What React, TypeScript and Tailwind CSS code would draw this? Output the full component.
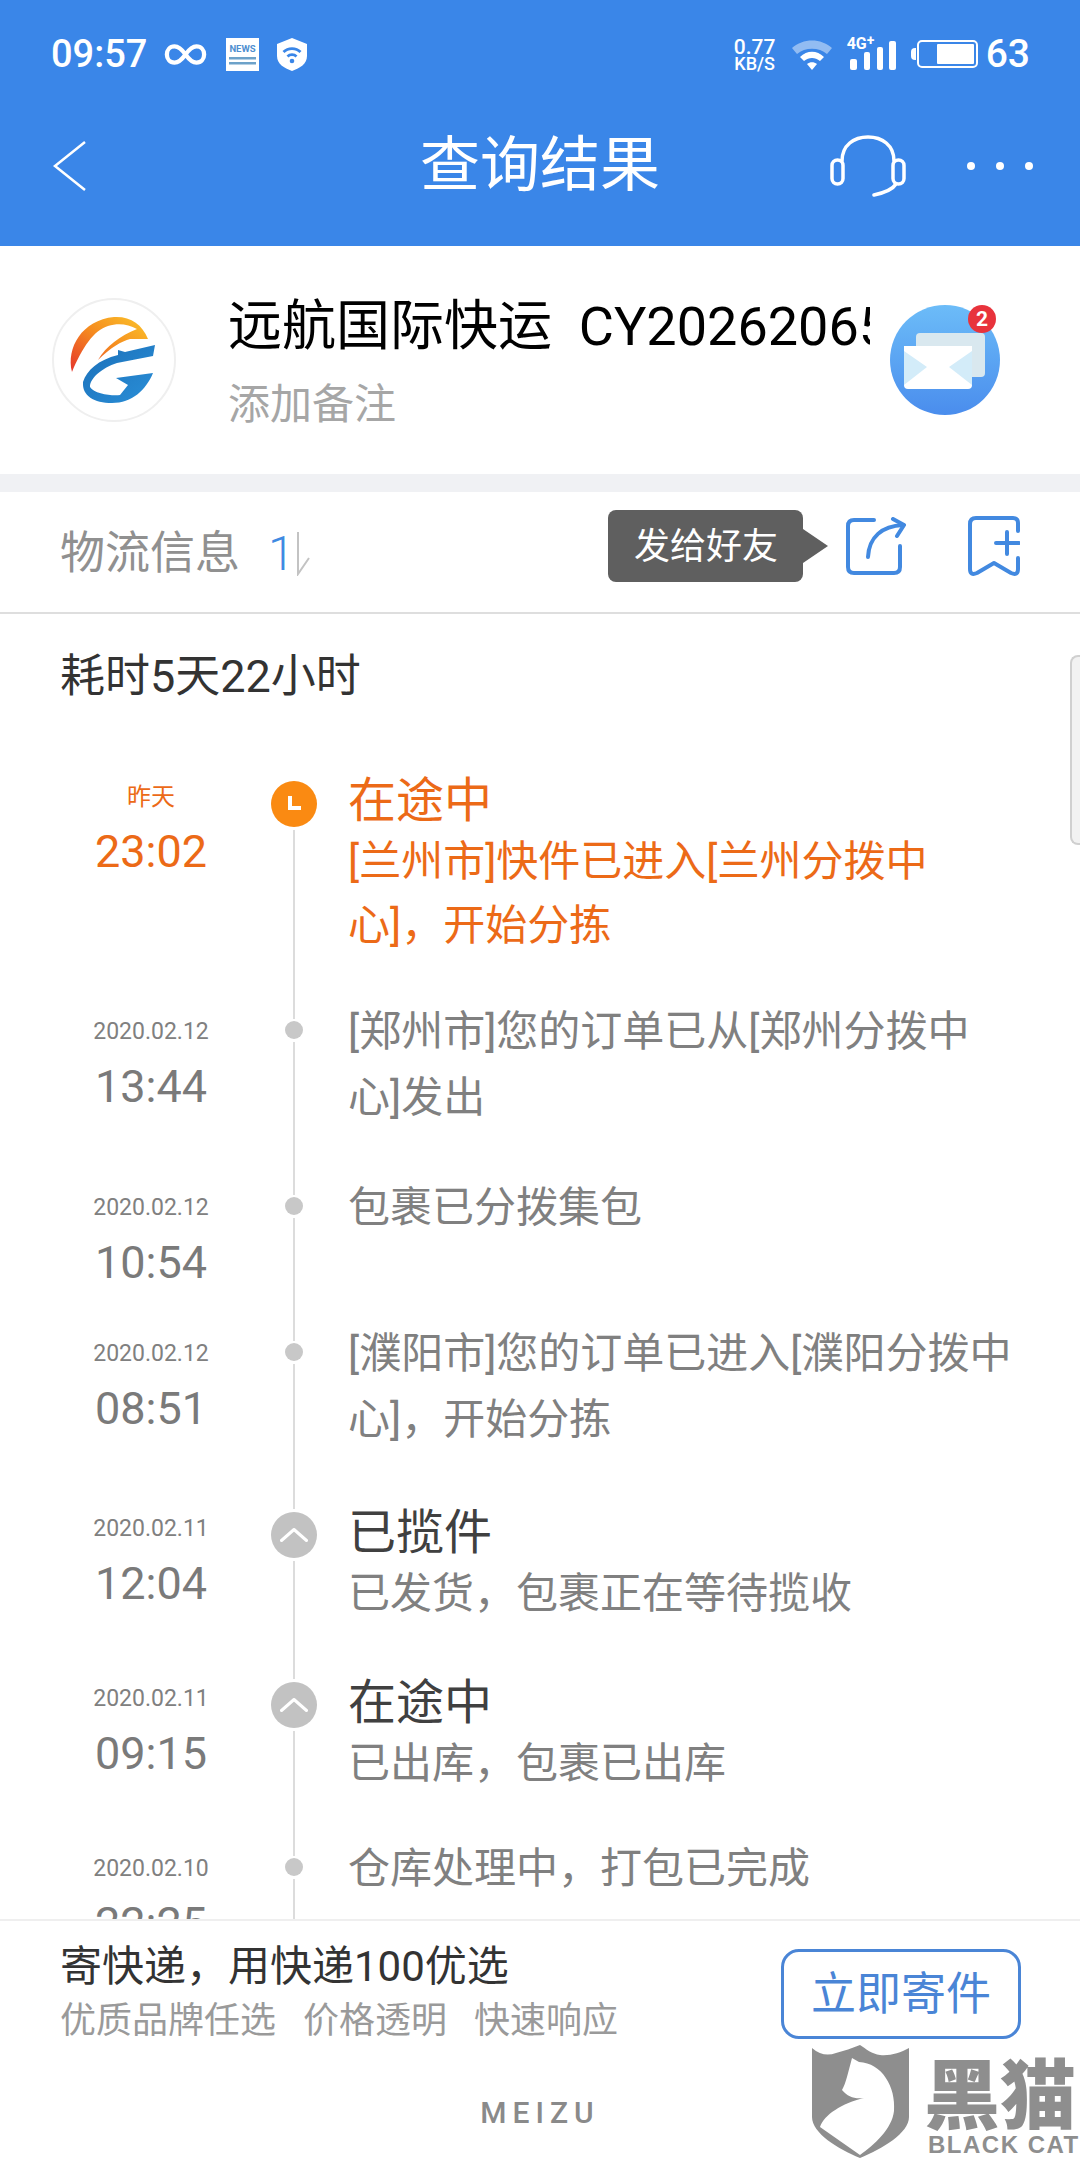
import React from "react";

const cjk = "font-['Roboto','Noto_Sans_CJK_SC',sans-serif]";

function Logo() {
  return (
    <svg viewBox="0 0 124 124" className="w-[124px] h-[124px] shrink-0">
      <defs>
        <linearGradient id="o" x1="0" y1="1" x2="1" y2="0">
          <stop offset="0" stopColor="#e5352c" />
          <stop offset="0.5" stopColor="#f58a1f" />
          <stop offset="1" stopColor="#fbc52a" />
        </linearGradient>
        <linearGradient id="b" x1="0" y1="0" x2="1" y2="1">
          <stop offset="0" stopColor="#1b6fb8" />
          <stop offset="1" stopColor="#2a8fd8" />
        </linearGradient>
      </defs>
      <circle cx="62" cy="62" r="61" fill="#fff" stroke="#efefef" strokeWidth="2" />
      <path d="M20 74C14 50 30 22 62 19C78 18 90 26 96 41L78 41C70 43 58 50 46 62C54 48 68 38 85 31C76 26 66 25 56 28C42 32 30 50 20 74Z" fill="url(#o)" />
      <path d="M103 47L101 58L65 65C50 70 38 80 38 89C42 96 60 98 68 97L76 87L64 80L101 75C94 92 80 105 60 105C42 105 30 98 31 84C35 72 46 62 66 57L66 52L73 54Z" fill="url(#b)" />
    </svg>
  );
}

function MailBadge() {
  return (
    <div className="relative w-[110px] h-[110px] shrink-0">
      <svg viewBox="0 0 110 110" className="w-[110px] h-[110px]">
        <defs>
          <linearGradient id="m" x1="0" y1="0" x2="0" y2="1">
            <stop offset="0" stopColor="#6cbcf8" />
            <stop offset="1" stopColor="#4a8ded" />
          </linearGradient>
        </defs>
        <circle cx="55" cy="55" r="55" fill="url(#m)" />
        <rect x="26" y="28" width="69" height="44" rx="4" fill="#d9e8ef" />
        <rect x="14" y="41" width="68" height="43" rx="4" fill="#ffffff" />
        <path d="M14 46L37 62L14 80Z" fill="#d3ecf9" />
        <path d="M82 46L59 62L82 80Z" fill="#d3ecf9" />
        <path d="M14 45L42 65Q48 69 54 65L82 45V41H14Z" fill="#ffffff" />
      </svg>
      <div className="absolute right-[4px] top-0 w-[28px] h-[28px] rounded-full bg-[#e8333c] text-white text-[21px] leading-[28px] text-center font-['Roboto'] font-bold">2</div>
    </div>
  );
}

function Row({
  h, date, time, text, title, orange, icon,
}: {
  h: string; date: string; time: string; text: string[]; title?: string; orange?: boolean; icon: "clock" | "up" | "dot";
}) {
  const tone = orange ? "text-[#ec6a17]" : "text-[#808080]";
  return (
    <div className={`flex ${h}`}>
      <div className="w-[272px] shrink-0 flex flex-col items-center pl-[30px] pt-[17px]">
        <div className={`h-[32px] leading-[32px] whitespace-nowrap ${orange ? "text-[24px] text-[#ec6a17]" : "text-[23px] text-[#808080]"}`}>{date}</div>
        <div className={`mt-[9px] h-[60px] leading-[60px] text-[45px] ${orange ? "text-[#ec6a17]" : "text-[#7a7a7a]"}`}>{time}</div>
      </div>
      <div className="w-[44px] shrink-0 flex flex-col items-center">
        {icon === "clock" && (
          <div className="mt-[17px] w-[46px] h-[46px] shrink-0 rounded-full bg-[#fa8a12] flex items-center justify-center">
            <svg viewBox="0 0 20 20" className="w-[20px] h-[20px]"><path d="M6 2V14H17" fill="none" stroke="#fff" strokeWidth="4" /></svg>
          </div>
        )}
        {icon === "up" && (
          <>
            <div className="w-[2px] h-[13px] bg-[#dcdcdc]" />
            <div className="mt-[3px] w-[46px] h-[46px] shrink-0 rounded-full bg-[#c2c2c2] flex items-center justify-center">
              <svg viewBox="0 0 28 14" className="w-[28px] h-[14px]"><path d="M1.500 12.500L14 1.500L26.500 12.500" fill="none" stroke="#fff" strokeWidth="3" strokeLinecap="round" strokeLinejoin="round" /></svg>
            </div>
          </>
        )}
        {icon === "dot" && (
          <>
            <div className="w-[2px] h-[20px] bg-[#dcdcdc]" />
            <div className="mt-[2px] w-[18px] h-[18px] shrink-0 rounded-full bg-[#c8c8c8]" />
          </>
        )}
        <div className="mt-[3px] w-[2px] flex-1 bg-[#dcdcdc]" />
      </div>
      <div className={`pl-[32px] w-[720px] ${title ? "pt-[6px]" : ""} ${tone}`}>
        {title && <div className={`h-[60px] leading-[62px] text-[48px] whitespace-nowrap ${orange ? "" : "text-[#404040]"}`}>{title}</div>}
        {text.map((t) => (
          <div key={t} className={`${title ? "h-[64px] leading-[64px]" : "h-[66px] leading-[66px]"} text-[42px] whitespace-nowrap`}>{t}</div>
        ))}
      </div>
    </div>
  );
}

export default function App() {
  return (
    <div className={`relative w-[1080px] h-[2160px] overflow-hidden bg-white flex flex-col ${cjk}`}>
      <header className="h-[246px] shrink-0 bg-[#3a86e8] text-white flex flex-col">
        <div className="h-[108px] flex items-center justify-between pl-[51px] pr-[50px]">
          <div className="flex items-center">
            <span className="text-[38px] font-medium leading-none">09:57</span>
            <svg viewBox="0 0 44 22" className="ml-[17px] w-[43px] h-[21px]"><path d="M22 11C17 4 14 2.500 10.500 2.500C5.500 2.500 2.500 6.500 2.500 11S5.500 19.500 10.500 19.500C14 19.500 17 18 22 11C27 4 30 2.500 33.500 2.500C38.500 2.500 41.500 6.500 41.500 11S38.500 19.500 33.500 19.500C30 19.500 27 18 22 11Z" fill="none" stroke="#fff" strokeWidth="4.500" /></svg>
            <svg viewBox="0 0 33 33" className="ml-[19px] w-[33px] h-[33px]">
              <rect width="33" height="33" fill="#fff" />
              <text x="16.500" y="14" textAnchor="middle" fontSize="9.500" fontWeight="700" fill="#4f8fd0" fontFamily="Roboto">NEWS</text>
              <rect x="3" y="19" width="27" height="2.500" fill="#6da2c9" />
              <rect x="3" y="24" width="27" height="2.500" fill="#6da2c9" />
            </svg>
            <svg viewBox="0 0 30 33" className="ml-[18px] w-[30px] h-[33px]">
              <path d="M15 0L30 6V18C30 26 23 30 15 33C7 30 0 26 0 18V6Z" fill="#fff" />
              <path d="M6.500 14C11 9.500 19 9.500 23.500 14M10.500 18.500C13 16 17 16 19.500 18.500" fill="none" stroke="#3a86e8" strokeWidth="2.800" />
              <circle cx="15" cy="23" r="2.300" fill="#3a86e8" />
            </svg>
          </div>
          <div className="flex items-center">
            <div className="w-[42px] flex flex-col items-center font-medium mr-[16px]">
              <span className="text-[21px] leading-[18px]">0.77</span>
              <span className="text-[18px] leading-[15px]">KB/S</span>
            </div>
            <svg viewBox="0 0 40 32" className="w-[40px] h-[32px] mr-[15px]">
              <path d="M0 10C11 0 29 0 40 10L35 16C27 9 13 9 5 16Z" fill="#fff" fillOpacity="0.45" />
              <path d="M8 19C15 12 25 12 32 19L28 23C23 19 17 19 12 23Z" fill="#fff" />
              <path d="M15 26C18 23.500 22 23.500 25 26L20 32Z" fill="#fff" />
            </svg>
            <div className="relative w-[50px] h-[32px] mr-[14px]">
              <span className="absolute left-0 top-[-2px] text-[16px] font-bold leading-[16px]">4G</span>
              <span className="absolute left-[20px] top-[-5px] text-[14px] font-bold leading-[14px]">+</span>
              <div className="absolute bottom-0 left-[3px] w-[7px] h-[11px] rounded-[2px] bg-white" />
              <div className="absolute bottom-0 left-[17px] w-[6px] h-[18px] rounded-[2px] bg-white" />
              <div className="absolute bottom-0 left-[30px] w-[6px] h-[23px] rounded-[2px] bg-white" />
              <div className="absolute bottom-0 left-[42px] w-[7px] h-[29px] rounded-[2px] bg-white" />
            </div>
            <div className="w-[5px] h-[12px] rounded-l-[4px] bg-white mr-[1px]" />
            <div className="w-[61px] h-[28px] rounded-[5px] border-[2px] border-white flex justify-end p-[2px] mr-[8px]">
              <div className="w-[37px] bg-white rounded-[1px]" />
            </div>
            <span className="text-[39px] font-medium leading-none">63</span>
          </div>
        </div>
        <div className="flex-1 flex items-center justify-between pl-[52px] pr-[47px] pb-[22px] relative">
          <svg viewBox="0 0 36 52" className="w-[36px] h-[52px]"><path d="M33 2L3 26L33 50" fill="none" stroke="#fff" strokeWidth="2.500" /></svg>
          <div className="absolute left-0 right-0 top-[18px] text-center text-[60px] leading-[80px]">查询结果</div>
          <div className="flex items-center">
            <svg viewBox="0 0 76 62" className="w-[76px] h-[62px] mr-[61px]">
              <path d="M12 26C12 10 24 2 38 2S64 10 64 26" fill="none" stroke="#fff" strokeWidth="3.500" strokeLinecap="round" />
              <path d="M66 49C63 54 53 58 44 60" fill="none" stroke="#fff" strokeWidth="3.500" strokeLinecap="round" />
              <rect x="2" y="25" width="11" height="24" rx="5.500" fill="none" stroke="#fff" strokeWidth="3.500" />
              <rect x="63" y="25" width="11" height="24" rx="5.500" fill="none" stroke="#fff" strokeWidth="3.500" />
            </svg>
            <div className="flex gap-[21px]">
              <div className="w-[8px] h-[8px] rounded-full bg-white" />
              <div className="w-[8px] h-[8px] rounded-full bg-white" />
              <div className="w-[8px] h-[8px] rounded-full bg-white" />
            </div>
          </div>
        </div>
      </header>

      <section className="h-[228px] shrink-0 flex items-center pl-[52px] pr-[80px]">
        <Logo />
        <div className="ml-[52px] w-[642px] shrink-0 overflow-hidden pt-[3px]">
          <div className="h-[72px] leading-[72px] text-[54px] text-black whitespace-nowrap">远航国际快运&nbsp;&nbsp;CY20262065</div>
          <div className="mt-[14px] h-[56px] leading-[56px] text-[42px] text-[#a6a6a6]">添加备注</div>
        </div>
        <div className="ml-[20px]"><MailBadge /></div>
      </section>
      <div className="h-[18px] shrink-0 bg-[#f0f1f4]" />

      <section className="h-[122px] shrink-0 border-b-[2px] border-[#dedede] flex items-center pl-[60px] pr-[60px]">
        <div className="mt-[4px] text-[45px] text-[#909090] whitespace-nowrap">物流信息</div>
        <div className="mt-[4px] ml-[28px] flex items-end h-[44px] text-[#3f8ae2]">
          <span className="text-[48px] leading-[44px] font-light">1</span>
          <svg viewBox="0 0 14 44" className="w-[14px] h-[44px] ml-[1px]"><path d="M2 0V42L13 26" fill="none" stroke="#c3c3c3" strokeWidth="2" /></svg>
        </div>
        <div className="flex-1" />
        <div className="mb-[12px] relative h-[72px] w-[195px] rounded-[8px] bg-[#5f5f5f] text-white text-[36px] leading-[74px] pl-[26px] whitespace-nowrap mr-[43px]">
          发给好友
          <div className="absolute left-[195px] top-[19px] w-0 h-0 border-y-[17px] border-y-transparent border-l-[25px] border-l-[#5f5f5f]" />
        </div>
        <svg viewBox="0 0 60 58" className="mb-[12px] w-[60px] h-[58px] mr-[62px]">
          <path d="M28 3H8Q2 3 2 9V50Q2 56 8 56H48Q54 56 54 50V29" fill="none" stroke="#4289e0" strokeWidth="4" strokeLinecap="round" />
          <path d="M22 40C23 20 36 9 57 8" fill="none" stroke="#4289e0" strokeWidth="4" strokeLinecap="round" />
          <path d="M47 2L58 8L51 19" fill="none" stroke="#4289e0" strokeWidth="4" strokeLinecap="round" strokeLinejoin="round" />
        </svg>
        <svg viewBox="0 0 52 61" className="mb-[12px] w-[52px] h-[61px]">
          <path d="M50 15V7Q50 2 45 2H8Q2 2 2 8V53Q2 60 9 57L26 47L43 57Q50 60 50 53V42" fill="none" stroke="#4289e0" strokeWidth="4" strokeLinecap="round" strokeLinejoin="round" />
          <path d="M39 16V38M28 27H51" fill="none" stroke="#4289e0" strokeWidth="4" strokeLinecap="round" />
        </svg>
      </section>

      <main className="flex-1 min-h-0 overflow-hidden">
        <div className="h-[150px] pl-[60px] pt-[36px] text-[45px] leading-[54px] text-[#333]">耗时5天22小时</div>
        <Row h="h-[235px]" orange icon="clock" date="昨天" time="23:02" title="在途中" text={["[兰州市]快件已进入[兰州分拨中", "心]，开始分拣"]} />
        <Row h="h-[176px]" icon="dot" date="2020.02.12" time="13:44" text={["[郑州市]您的订单已从[郑州分拨中", "心]发出"]} />
        <Row h="h-[146px]" icon="dot" date="2020.02.12" time="10:54" text={["包裹已分拨集包"]} />
        <Row h="h-[175px]" icon="dot" date="2020.02.12" time="08:51" text={["[濮阳市]您的订单已进入[濮阳分拨中", "心]，开始分拣"]} />
        <Row h="h-[170px]" icon="up" date="2020.02.11" time="12:04" title="已揽件" text={["已发货，包裹正在等待揽收"]} />
        <Row h="h-[170px]" icon="up" date="2020.02.11" time="09:15" title="在途中" text={["已出库，包裹已出库"]} />
        <Row h="h-[170px]" icon="dot" date="2020.02.10" time="22:25" text={["仓库处理中，打包已完成"]} />
      </main>

      <footer className="h-[241px] shrink-0 border-t-[2px] border-[#efefef] flex items-start pl-[60px] pr-[59px] pt-[20px]">
        <div className="flex-1">
          <div className="h-[52px] leading-[52px] text-[42px] text-[#333] whitespace-nowrap">寄快递，用快递100优选</div>
          <div className="mt-[3px] flex gap-[27px] text-[36px] leading-[50px] text-[#9a9a9a] whitespace-nowrap">
            <span>优质品牌任选</span><span>价格透明</span><span>快速响应</span>
          </div>
        </div>
        <div className="mt-[8px] w-[240px] h-[90px] rounded-[18px] border-[3px] border-[#4a85d6] text-[#4a85d6] text-[45px] leading-[86px] text-center whitespace-nowrap">立即寄件</div>
      </footer>

      <div className="absolute left-0 right-0 top-[2098px] text-center text-[30px] leading-[30px] tracking-[6px] font-medium text-[#8a8a8a] font-['Roboto']">MEIZU</div>

      <div className="absolute right-0 top-[655px] w-[10px] h-[190px] rounded-l-[8px] border-[2px] border-r-0 border-[#d0d0d0] bg-[#f2f2f2]" />

      <div className="absolute left-[812px] top-[2045px] w-[268px] h-[115px] text-[#8e8e8e]">
        <svg viewBox="0 0 97 113" className="absolute left-0 top-0 w-[97px] h-[113px]">
          <path d="M0 3C8 10 16 11 24 8C32 6 40 3 48 0C54 4 60 9 68 10C78 11 88 8 97 3V72C97 88 70 104 48 113C26 104 0 88 0 72Z" fill="#8e8e8e" />
          <path d="M40 13L47 17C70 18 84 42 82 66C80 84 62 100 48 110L8 82C12 70 30 58 52 53C42 54 36 52 30 45C34 38 36 28 40 13Z" fill="#fff" />
        </svg>
        <div className="absolute left-[112px] top-[3px] text-[76px] leading-[84px] font-black whitespace-nowrap font-['Noto_Sans_CJK_SC']">黑猫</div>
        <div className="absolute left-[116px] top-[86px] text-[24px] leading-[28px] tracking-[1.500px] font-bold whitespace-nowrap font-['Liberation_Sans']">BLACK CAT</div>
      </div>
    </div>
  );
}
